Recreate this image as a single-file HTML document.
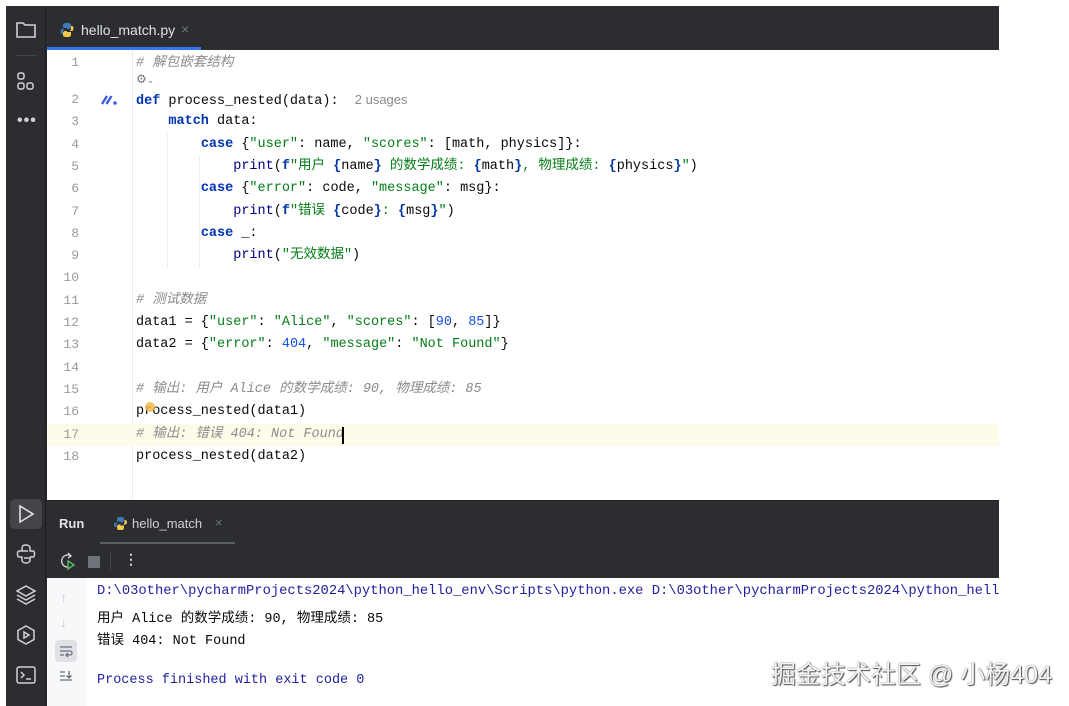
<!DOCTYPE html>
<html><head><meta charset="utf-8"><style>
*{margin:0;padding:0;box-sizing:border-box}
body{width:1069px;height:706px;background:#fff;position:relative;overflow:hidden;font-family:"Liberation Sans","Noto Sans CJK SC",sans-serif}
.a{position:absolute}
.mono{font-family:"Liberation Mono","Noto Sans CJK SC",monospace;font-size:13.5px;white-space:pre}
.ln{position:absolute;left:47px;width:32px;text-align:right;color:#9a9a9a;font-family:"Liberation Mono",monospace;font-size:13px}
.cl{position:absolute;left:136px;height:22px;line-height:22px;color:#080808}
.k{color:#0033b3;font-weight:bold}.s{color:#067d17}.s b{color:#0037a6}.p{color:#000080}.c{color:#8c8c8c;font-style:italic}.n{color:#1750eb}
</style></head><body>
<div class="a" style="left:6px;top:6px;width:993px;height:700px;background:#2b2d30"></div>
<div class="a" style="left:6px;top:6px;width:40px;height:700px;background:#2b2d30;border-right:1px solid #1e1f22"></div>
<svg class="a" style="left:14px;top:18px" width="24" height="24" fill="none" stroke="#cfd1d6" stroke-width="1.6"><path d="M3 5h6l2 2h10v12H3z"/></svg>
<div class="a" style="left:15px;top:55px;width:22px;height:1px;background:#43454a"></div>
<svg class="a" style="left:14px;top:70px" width="24" height="24" fill="none" stroke="#cfd1d6" stroke-width="1.5"><rect x="4" y="3" width="6" height="6" rx="2"/><rect x="4" y="13" width="6" height="6" rx="2"/><rect x="13" y="13" width="6" height="6" rx="2"/></svg>
<div class="a" style="left:17px;top:112px;color:#cfd1d6;font-size:16px;letter-spacing:1px;font-weight:bold">•••</div>
<div class="a" style="left:10px;top:499px;width:32px;height:30px;background:#43454a;border-radius:5px"></div>
<svg class="a" style="left:14px;top:502px" width="24" height="24" fill="none" stroke="#dfe1e5" stroke-width="1.6"><path d="M6 4l13 8-13 8z"/></svg>
<svg class="a" style="left:14px;top:542px" width="24" height="24" fill="none" stroke="#cfd1d6" stroke-width="1.5"><path d="M12 3c-4 0-4 2-4 4v2h6M8 9H5c-2 0-2 6 0 6h3v3c0 2 2 3 4 3s4-1 4-3v-2h-6M16 15h3c2 0 2-6 0-6h-3V6c0-2-2-3-4-3"/></svg>
<svg class="a" style="left:14px;top:583px" width="24" height="24" fill="none" stroke="#cfd1d6" stroke-width="1.5"><path d="M12 3l9 5-9 5-9-5zM3 12l9 5 9-5M3 16l9 5 9-5"/></svg>
<svg class="a" style="left:14px;top:623px" width="24" height="24" fill="none" stroke="#cfd1d6" stroke-width="1.5"><path d="M12 3l8 4.5v9L12 21l-8-4.5v-9z"/><path d="M10 9l5 3-5 3z"/></svg>
<svg class="a" style="left:14px;top:663px" width="24" height="24" fill="none" stroke="#cfd1d6" stroke-width="1.5"><rect x="3" y="4" width="18" height="16" rx="2"/><path d="M7 9l3 3-3 3M12 16h5"/></svg>
<svg class="a" style="left:59px;top:22px" width="16" height="16"><path d="M8 1c-4 0-4 1-4 3v2h4v1H3c-2 0-2 5 0 5h1V9c0-1 1-2 2-2h4c1 0 2-1 2-2V3c0-2-2-2-4-2z" fill="#3d7ab8"/><path d="M8 15c4 0 4-1 4-3v-2H8V9h5c2 0 2-5 0-5h-1v3c0 1-1 2-2 2H6c-1 0-2 1-2 2v2c0 2 2 2 4 2z" fill="#f2c94c"/></svg>
<div class="a" style="left:81px;top:22px;color:#dfe1e5;font-size:14px">hello_match.py</div>
<div class="a" style="left:181px;top:21px;color:#6f737a;font-size:14px">×</div>
<div class="a" style="left:47px;top:47px;width:154px;height:3px;background:#3574f0"></div>
<div class="a" style="left:47px;top:50px;width:952px;height:450px;background:#fff"></div>
<div class="a" style="left:132px;top:50px;width:1px;height:450px;background:#ebecf0"></div>
<div class="a" style="left:47px;top:424px;width:952px;height:22px;background:#fefbe9"></div>
<div class="a" style="left:167px;top:134px;width:1px;height:134px;background:#ebecf0"></div>
<div class="a" style="left:199px;top:156px;width:1px;height:112px;background:#ebecf0"></div>
<div class="ln" style="top:55px">1</div>
<div class="ln" style="top:92px">2</div><div class="ln" style="top:114px">3</div><div class="ln" style="top:137px">4</div><div class="ln" style="top:159px">5</div><div class="ln" style="top:181px">6</div><div class="ln" style="top:204px">7</div><div class="ln" style="top:226px">8</div><div class="ln" style="top:248px">9</div><div class="ln" style="top:270px">10</div><div class="ln" style="top:293px">11</div><div class="ln" style="top:315px">12</div><div class="ln" style="top:337px">13</div><div class="ln" style="top:360px">14</div><div class="ln" style="top:382px">15</div><div class="ln" style="top:404px">16</div><div class="ln" style="top:427px">17</div><div class="ln" style="top:449px">18</div>
<svg class="a" style="left:101px;top:94px" width="18" height="12"><path d="M1 10L6 2M5.5 10L10.5 2" stroke="#3f5be0" stroke-width="2.4"/><circle cx="14" cy="9" r="1.8" fill="#3f5be0"/></svg>
<div class="cl mono" style="top:53px"><span class="c"># 解包嵌套结构</span></div>
<div class="a" style="left:136px;top:72px;color:#777;font-size:12px">⚙<span style="font-size:9px">⌄</span></div>
<div class="cl mono" style="top:89px"><span class="k">def</span> process_nested(data):  <span style="font-family:'Liberation Sans',sans-serif;color:#8c8c8c;font-size:13px">2 usages</span></div>
<div class="cl mono" style="top:111px">    <span class="k">match</span> data:</div>
<div class="cl mono" style="top:134px">        <span class="k">case</span> {<span class="s">"user"</span>: name, <span class="s">"scores"</span>: [math, physics]}:</div>
<div class="cl mono" style="top:156px">            <span class="p">print</span>(<span class="s"><b>f</b>"用户 <b>{</b><span style="color:#080808">name</span><b>}</b> 的数学成绩: <b>{</b><span style="color:#080808">math</span><b>}</b>, 物理成绩: <b>{</b><span style="color:#080808">physics</span><b>}</b>"</span>)</div>
<div class="cl mono" style="top:178px">        <span class="k">case</span> {<span class="s">"error"</span>: code, <span class="s">"message"</span>: msg}:</div>
<div class="cl mono" style="top:201px">            <span class="p">print</span>(<span class="s"><b>f</b>"错误 <b>{</b><span style="color:#080808">code</span><b>}</b>: <b>{</b><span style="color:#080808">msg</span><b>}</b>"</span>)</div>
<div class="cl mono" style="top:223px">        <span class="k">case</span> _:</div>
<div class="cl mono" style="top:245px">            <span class="p">print</span>(<span class="s">"无效数据"</span>)</div>
<div class="cl mono" style="top:290px"><span class="c"># 测试数据</span></div>
<div class="cl mono" style="top:312px">data1 = {<span class="s">"user"</span>: <span class="s">"Alice"</span>, <span class="s">"scores"</span>: [<span class="n">90</span>, <span class="n">85</span>]}</div>
<div class="cl mono" style="top:334px">data2 = {<span class="s">"error"</span>: <span class="n">404</span>, <span class="s">"message"</span>: <span class="s">"Not Found"</span>}</div>
<div class="cl mono" style="top:379px"><span class="c"># 输出: 用户 Alice 的数学成绩: 90, 物理成绩: 85</span></div>
<div class="cl mono" style="top:401px">process_nested(data1)</div>
<div class="a" style="left:145px;top:402px;width:10px;height:10px;border-radius:50%;background:#f2b94a;opacity:.85"></div>
<div class="cl mono" style="top:424px"><span class="c"># 输出: 错误 404: Not Found</span></div>
<div class="a" style="left:342px;top:427px;width:2px;height:17px;background:#000"></div>
<div class="cl mono" style="top:446px">process_nested(data2)</div>
<div class="a" style="left:47px;top:500px;width:952px;height:1px;background:#1e1f22"></div>
<div class="a" style="left:59px;top:516px;color:#dfe1e5;font-size:13px;font-weight:bold">Run</div>
<svg class="a" style="left:113px;top:516px" width="15" height="15"><path d="M7.5 1c-3.5 0-3.5 1-3.5 3v1.5h3.5v1H2.5c-2 0-2 4.5 0 4.5h1V8.5c0-1 1-2 2-2h3.5c1 0 2-1 2-2V3c0-2-1.5-2-3.5-2z" fill="#3d7ab8"/><path d="M7.5 14c3.5 0 3.5-1 3.5-3V9.5H7.5v-1h5c2 0 2-4.5 0-4.5h-1v2.5c0 1-1 2-2 2H6c-1 0-2 1-2 2v1.5c0 2 1.5 2 3.5 2z" fill="#f2c94c"/></svg>
<div class="a" style="left:132px;top:516px;color:#cfd1d6;font-size:13px">hello_match</div>
<div class="a" style="left:215px;top:515px;color:#6f737a;font-size:13px">×</div>
<div class="a" style="left:100px;top:542px;width:135px;height:2px;background:#5a5d63"></div>
<svg class="a" style="left:58px;top:552px" width="18" height="18" fill="none" stroke="#cfd1d6" stroke-width="1.4"><path d="M13 4a6 6 0 1 0-3 11"/><path d="M10 1l3 3-3 2"/><path d="M10 9l6 4-6 4z" stroke="#5fb865"/></svg>
<div class="a" style="left:88px;top:556px;width:12px;height:12px;background:#6f737a;border-radius:1px"></div>
<div class="a" style="left:110px;top:551px;width:1px;height:20px;background:#43454a"></div>
<div class="a" style="left:124px;top:551px;color:#cfd1d6;font-size:14px;font-weight:bold">⋮</div>
<div class="a" style="left:47px;top:578px;width:40px;height:128px;background:#f7f8fa"></div>
<div class="a" style="left:87px;top:578px;width:912px;height:128px;background:#fff;overflow:hidden"><div class="a mono" style="left:10px;top:6px;color:#1f1fa0;font-size:13.8px">D:\03other\pycharmProjects2024\python_hello_env\Scripts\python.exe D:\03other\pycharmProjects2024\python_hello\</div></div>
<div class="a" style="left:60px;top:589px;color:#c9ccd1;font-size:14px">↑</div>
<div class="a" style="left:60px;top:614px;color:#c9ccd1;font-size:14px">↓</div>
<div class="a" style="left:55px;top:640px;width:22px;height:22px;background:#dfe1e5;border-radius:4px"></div>
<svg class="a" style="left:58px;top:643px" width="16" height="16" fill="none" stroke="#6c707e" stroke-width="1.3"><path d="M2 4h12M2 8h10a2 2 0 0 1 0 4H9M2 12h4M10 10l-2 2 2 2"/></svg>
<svg class="a" style="left:58px;top:668px" width="16" height="16" fill="none" stroke="#6c707e" stroke-width="1.3"><path d="M2 4h5M2 8h5M2 12h12M11 3v7M8.5 7.5L11 10l2.5-2.5"/></svg>
<div class="a mono" style="left:97px;top:606px;color:#080808">用户 Alice 的数学成绩: 90, 物理成绩: 85</div>
<div class="a mono" style="left:97px;top:628px;color:#080808">错误 404: Not Found</div>
<div class="a mono" style="left:97px;top:673px;color:#1f1fa0">Process finished with exit code 0</div>
<div class="a" style="left:771px;top:655px;color:#f4f4f4;font-size:25px;text-shadow:0 0 1px #333,1px 1px 1px #555;font-family:'Liberation Sans','Noto Sans CJK SC',sans-serif">掘金技术社区 @ 小杨404</div>
</body></html>
